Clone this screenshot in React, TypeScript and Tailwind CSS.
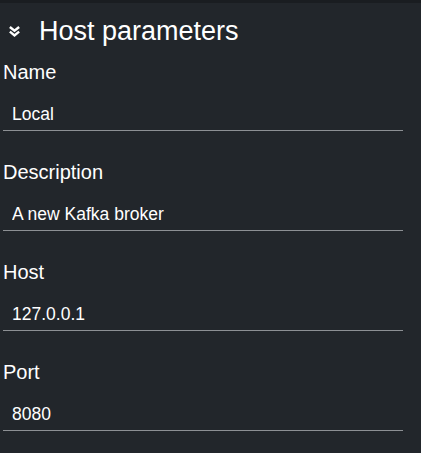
const fields = [
  { label: "Name", value: "Local" },
  { label: "Description", value: "A new Kafka broker" },
  { label: "Host", value: "127.0.0.1" },
  { label: "Port", value: "8080" },
];

function IconChevronsDown({ className }: { className?: string }) {
  return (
    <svg viewBox="0 0 11 11" className={className} fill="none" stroke="currentColor" strokeWidth={2.4} strokeLinecap="square">
      <polyline points="1.8,1.8 5.5,4.8 9.2,1.8" />
      <polyline points="1.8,6.4 5.5,9.4 9.2,6.4" />
    </svg>
  );
}

export default function App() {
  return (
    <div className="min-h-screen bg-[#22262b] font-['Liberation_Sans',Arial,sans-serif] text-white">
      <div className="h-[3px] bg-[#1a1d21]" />
      <div className="flex items-center pt-[15px]">
        <IconChevronsDown className="ml-[9px] h-[11px] w-[11px]" />
        <h2 className="ml-[19px] text-[27px] leading-none">Host parameters</h2>
      </div>
      <form className="mt-[17px] flex w-[403px] flex-col gap-[31px] pl-[3px]" onSubmit={(e) => e.preventDefault()}>
        {fields.map((f) => (
          <label key={f.label} className="flex flex-col">
            <span className="text-[20px] leading-none">{f.label}</span>
            <input
              defaultValue={f.value}
              className="mt-[15px] block h-[34px] w-[400px] border-b border-[#8d9094] bg-transparent pl-[9px] pt-[1px] text-[17.5px] leading-none text-white outline-none"
            />
          </label>
        ))}
      </form>
    </div>
  );
}
